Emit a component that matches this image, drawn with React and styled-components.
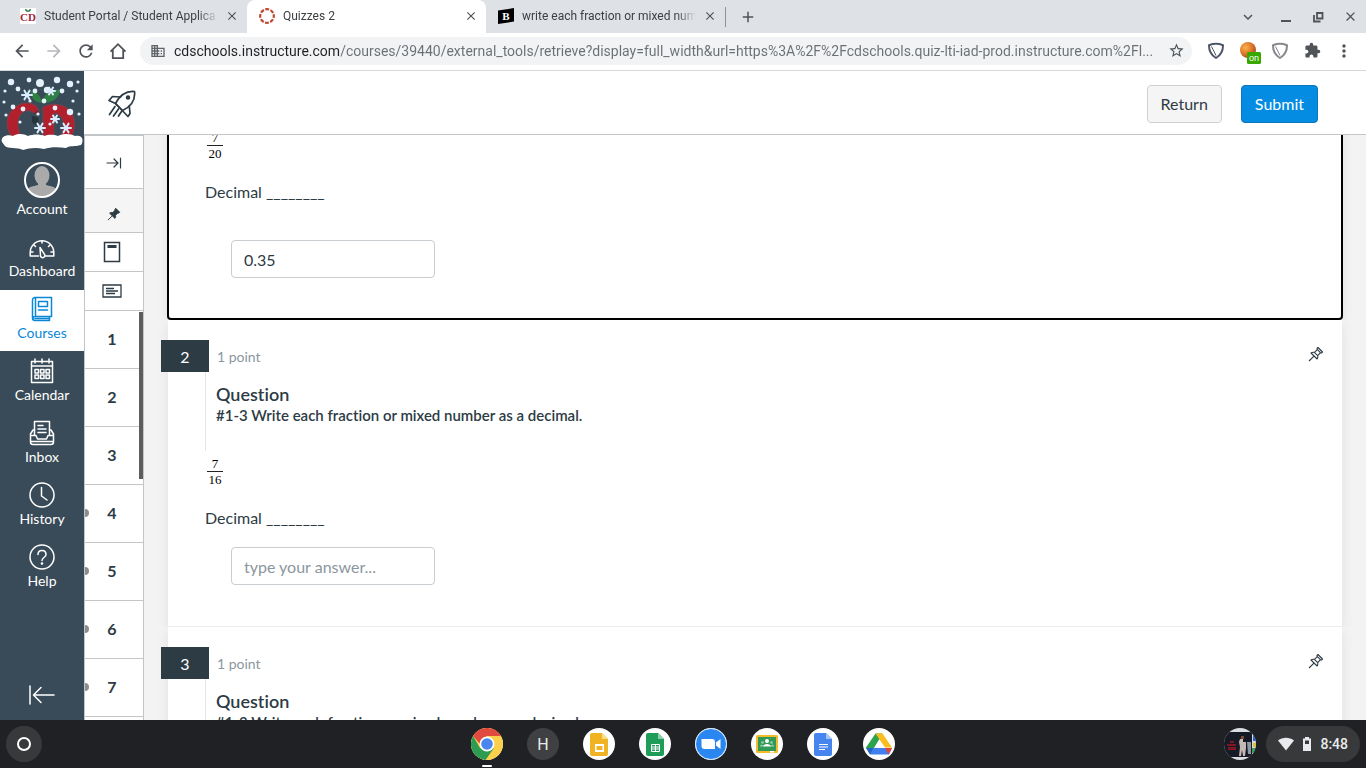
import React from "react";
import styled, { createGlobalStyle, css } from "styled-components";
import {
  MdArrowBack,
  MdArrowForward,
  MdRefresh,
  MdDomain,
  MdStarBorder,
  MdExtension,
  MdMoreVert,
  MdClose,
  MdAdd,
  MdKeyboardArrowDown,
} from "react-icons/md";

const GlobalStyle = createGlobalStyle`
  *, *::before, *::after { box-sizing: border-box; }
  body { margin: 0; font-family: Lato, "Liberation Sans", sans-serif; color: #2d3b45; }
  button, input { font: inherit; color: inherit; margin: 0; }
  button { border: 0; background: none; padding: 0; cursor: pointer; }
  a { color: inherit; text-decoration: none; }
  svg { display: block; flex: none; }
  h2, h3, p, ul, ol { margin: 0; padding: 0; }
  ul, ol { list-style: none; }
`;

const Screen = styled.div`
  display: flex;
  flex-direction: column;
  height: 100vh;
  overflow: hidden;
  background: #fff;
`;

/* Browser frame */

const TabStrip = styled.header`
  flex: none;
  display: flex;
  align-items: center;
  height: 33px;
  padding-left: 8px;
  background: #dee1e6;
  font-family: Roboto, sans-serif;
  font-size: 12px;
  color: #3c4043;
`;

const Tab = styled.div`
  display: flex;
  align-items: center;
  gap: 8px;
  flex: 0 1 239px;
  min-width: 0;
  height: 33px;
  padding: 0 9px 2px 12px;
  ${(p) => p.$active && css`background: #fff; border-radius: 8px 8px 0 0;`}
`;

const TabTitle = styled.span`
  flex: 1;
  min-width: 0;
  overflow: hidden;
  white-space: nowrap;
  line-height: 16px;
  mask-image: linear-gradient(to right, #000 calc(100% - 20px), transparent);
`;

const IconButton = styled.button`
  display: flex;
  align-items: center;
  justify-content: center;
  flex: none;
  width: ${(p) => p.$w || 32}px;
  height: ${(p) => p.$h || 32}px;
  color: ${(p) => p.$tone || "#505357"};
`;

const StripDivider = styled.span`
  width: 1px;
  height: 20px;
  margin-right: 6px;
  background: #8f9398;
`;

const WindowControls = styled.div`
  display: flex;
  align-items: center;
  margin-left: auto;
`;

const Toolbar = styled.div`
  flex: none;
  display: flex;
  align-items: center;
  height: 38px;
  padding: 0 6px 2px;
  border-bottom: 1px solid #d5d7da;
`;

const AddressBar = styled.label`
  display: flex;
  align-items: center;
  gap: 8px;
  flex: 1;
  min-width: 0;
  height: 28px;
  margin: 0 8px 0 6px;
  padding-left: 10px;
  border-radius: 14px;
  background: #f1f3f4;
  color: #5f6368;
`;

const AddressInput = styled.input`
  flex: 1;
  min-width: 0;
  height: 20px;
  padding: 0;
  border: 0;
  outline: 0;
  font-family: Roboto, sans-serif;
  font-size: 14px;
  -webkit-text-fill-color: transparent;
  background: linear-gradient(to right, #202124 166px, #6b6f74 166px);
  background-clip: text;
`;

/* Canvas global navigation */

const Workspace = styled.div`
  display: flex;
  flex: 1;
  min-height: 0;
`;

const GlobalNav = styled.nav`
  display: flex;
  flex-direction: column;
  flex: none;
  width: 84px;
  background: #394b58;
  color: #fff;
`;

const LogoLink = styled.a`
  flex: none;
  height: 85px;
`;

const NavList = styled.ul`
  display: flex;
  flex-direction: column;
  gap: 1px;
`;

const NavLink = styled.a`
  display: flex;
  flex-direction: column;
  align-items: center;
  gap: 1px;
  padding: 6px 0 8px;
  font-size: 14px;
  line-height: 20px;
  ${(p) => p.$active && css`background: #fff; color: #0b87d6;`}
`;

const CollapseButton = styled.button`
  display: flex;
  justify-content: center;
  margin-top: auto;
  padding: 12px 0;
`;

/* Quiz */

const Quiz = styled.div`
  display: flex;
  flex-direction: column;
  flex: 1;
  min-width: 0;
`;

const QuizHeader = styled.header`
  flex: none;
  display: flex;
  align-items: center;
  gap: 19px;
  height: 64px;
  padding: 2px 48px 0 24px;
  border-bottom: 1px solid #c3c6c9;
`;

const ActionButton = styled.button`
  height: 38px;
  padding: 0 13px;
  border: 1px solid ${(p) => (p.$primary ? "#0a76bd" : "#cfd2d5")};
  border-radius: 4px;
  background: ${(p) => (p.$primary ? "#048be2" : "#f5f5f5")};
  color: ${(p) => (p.$primary ? "#fff" : "#2d3b45")};
  font-size: 16px;
  line-height: 20px;
  &:first-of-type { margin-left: auto; }
`;

const QuizBody = styled.div`
  display: flex;
  flex: 1;
  min-height: 0;
`;

const QuestionRail = styled.aside`
  display: flex;
  flex-direction: column;
  flex: none;
  width: 60px;
  border: 1px solid #c3c6c9;
  border-bottom: 0;
  background: #fff;
  overflow: hidden;
`;

const RailTool = styled.button`
  display: flex;
  align-items: center;
  justify-content: center;
  flex: none;
  height: ${(p) => p.$h}px;
  padding-top: ${(p) => (p.$tinted ? 6 : p.$wide ? 2 : 0)}px;
  padding-right: ${(p) => (p.$tinted || p.$wide ? 0 : 4)}px;
  border-bottom: 1px solid #c3c6c9;
  background: ${(p) => (p.$tinted ? "#f5f5f5" : "#fff")};
`;

const RailScroll = styled.div`
  position: relative;
  flex: 1;
  min-height: 0;
  overflow: hidden;
`;

const RailThumb = styled.span`
  position: absolute;
  top: 1px;
  right: 0;
  width: 4px;
  height: 167px;
  background: #5d5d5d;
`;

const RailNumber = styled.button`
  position: relative;
  display: block;
  width: 100%;
  height: 58px;
  padding: 0 4px 2px 0;
  border-bottom: 1px solid #c3c6c9;
  font-size: 16px;
  font-weight: 700;
  ${(p) => p.$unseen && css`
    &::before {
      content: "";
      position: absolute;
      left: -4px;
      top: 24px;
      width: 8px;
      height: 8px;
      border-radius: 50%;
      background: #8b8d8f;
    }
  `}
`;

const QuestionScroll = styled.main`
  flex: 1;
  min-width: 0;
  padding: 0 23px;
  background: #f3f3f3;
  overflow: hidden;
`;

const QuestionSheet = styled.div`
  margin-top: -11px;
`;

const QuestionCard = styled.section`
  ${(p) => p.$focused
    ? css`
        position: relative;
        padding: 4px 36px 40px;
        border: 2px solid #000;
        border-radius: 4px;
      `
    : css`
        margin: 0 1px;
        padding: 20px 18px 41px 37px;
        border-bottom: 1px solid #ebedee;
      `}
  background: #fff;
  box-shadow: 0 4px 12px rgba(0, 0, 0, 0.08);
  clip-path: inset(0 -20px);
`;

const CardTop = styled.div`
  display: flex;
  align-items: flex-start;
  height: 32px;
  margin-left: -44px;
`;

const NumberBadge = styled.h2`
  width: 48px;
  height: 32px;
  background: #2d3b45;
  color: #fff;
  font-size: 16px;
  font-weight: 400;
  line-height: 34px;
  text-align: center;
`;

const Points = styled.span`
  flex: 1;
  padding-left: 8px;
  font-size: 14px;
  line-height: 34px;
  color: #8b969e;
`;

const Stimulus = styled.div`
  padding: 11px 0 26px 10px;
  border-left: 1px solid #e4e6e8;
  font-variant-ligatures: none;
`;

const StimulusTitle = styled.h3`
  font-size: 18px;
  font-weight: 600;
  line-height: 22px;
`;

const StimulusText = styled.p`
  font-size: 15px;
  font-weight: 600;
  line-height: 20px;
`;

const Fraction = styled.div`
  display: flex;
  flex-direction: column;
  width: 16px;
  margin: ${(p) => (p.$first ? 0 : 5)}px 0 0 2px;
  font-family: "Liberation Serif", serif;
  font-size: 13px;
  line-height: 15px;
  text-align: center;
  color: #000;
  span:first-child { border-bottom: 1px solid #222; }
`;

const Prompt = styled.label`
  display: block;
  margin-top: 19px;
  font-size: 16px;
  line-height: 24px;
`;

const AnswerInput = styled.input`
  display: block;
  width: 204px;
  height: 38px;
  margin: ${(p) => (p.$spaced ? 36 : 17)}px 0 0 26px;
  padding: 0 12px;
  border: 1px solid #c7cdd1;
  border-radius: 4px;
  background: #fff;
  font-size: 16px;
  outline: 0;
  &::placeholder { color: #8b969e; }
`;

/* Shelf */

const Shelf = styled.footer`
  flex: none;
  display: grid;
  grid-template-columns: 1fr auto 1fr;
  align-items: center;
  height: 48px;
  padding: 0 6px;
  background: #202124;
  font-family: Roboto, sans-serif;
  color: #e8eaed;
`;

const ShelfApps = styled.div`
  display: flex;
  gap: 24px;
`;

const AppButton = styled.button`
  position: relative;
  width: 32px;
  height: 32px;
  border-radius: 50%;
  background: ${(p) => p.$bg || "#fff"};
  font-size: 16px;
  ${(p) => p.$running && css`
    &::after {
      content: "";
      position: absolute;
      left: 11px;
      bottom: -7px;
      width: 10px;
      height: 2px;
      border-radius: 1px;
      background: #fff;
    }
  `}
`;

const Launcher = styled.button`
  display: flex;
  align-items: center;
  justify-content: center;
  width: 36px;
  height: 36px;
  border-radius: 50%;
  background: #38393b;
`;

const ShelfEnd = styled.div`
  display: flex;
  align-items: center;
  justify-content: flex-end;
  gap: 10px;
`;

const StatusTray = styled.button`
  display: flex;
  align-items: center;
  gap: 8px;
  height: 36px;
  padding: 0 12px;
  border-radius: 18px;
  background: #38393b;
  font-size: 14px;
  font-weight: 500;
`;

/* Drawings */

const Line = ({ size = 26, width = 1.5, box = 26, children }) => (
  <svg width={size} height={size} viewBox={`0 0 ${box} ${box}`} fill="none" stroke="currentColor"
    strokeWidth={width} strokeLinecap="round" strokeLinejoin="round">{children}</svg>
);

const FaviconCD = () => (
  <svg width="16" height="16" viewBox="0 0 16 16">
    <rect width="16" height="16" fill="#fff" />
    <text x="8" y="13" textAnchor="middle" fontFamily="Liberation Serif, serif" fontWeight="700" fontSize="11" fill="#a3263a">CD</text>
    <path d="M8 4C6 4 5 3 5 1c2 0 3 1 3 3 0-2 1-3 3-3 0 2-1 3-3 3" fill="#2f7d4a" />
  </svg>
);

const FaviconCanvas = () => (
  <svg width="16" height="16" viewBox="0 0 16 16" fill="none">
    <circle cx="8" cy="8" r="6.8" stroke="#c0442f" strokeWidth="2.2" strokeDasharray="3.9 1.44" strokeDashoffset="1.95" />
  </svg>
);

const FaviconBartleby = () => (
  <svg width="16" height="16" viewBox="0 0 16 16">
    <path d="M0 2.5 16 0v13.5L0 16z" fill="#000" />
    <text x="8" y="12" textAnchor="middle" fontFamily="Liberation Serif, serif" fontWeight="700" fontSize="11" fill="#fff">B</text>
  </svg>
);

const HomeIcon = () => (
  <svg width="18" height="18" viewBox="0 0 18 18" fill="none" stroke="currentColor" strokeWidth="1.8">
    <path d="M1.5 9.6 9 2.2l7.500 7.400M3.800 8v8.100h10.400V8" />
  </svg>
);

const ShieldIcon = ({ tone }) => (
  <svg width="18" height="18" viewBox="0 0 18 18" fill="none" stroke={tone} strokeWidth="2" strokeLinejoin="round">
    <path d="M2 3.200c4-1.600 10-1.600 14 0 .1 5.500-2 10-7 12.800C4 13.200 1.900 8.700 2 3.200z" />
    <path d="M4.500 4.500 9 13.500" strokeWidth="1" />
  </svg>
);

const ToggleExtensionIcon = () => (
  <svg width="26" height="26" viewBox="0 0 26 26">
    <defs>
      <radialGradient id="ball" cx=".35" cy=".35" r=".8">
        <stop offset="0" stopColor="#f6b24c" /><stop offset=".5" stopColor="#e2762b" /><stop offset="1" stopColor="#8f3d1c" />
      </radialGradient>
    </defs>
    <circle cx="13" cy="12" r="8" fill="url(#ball)" />
    <rect x="12" y="14" width="14" height="12" rx="1.500" fill="#38a800" />
    <text x="19" y="23" textAnchor="middle" fontFamily="Liberation Sans, sans-serif" fontSize="9" fill="#fff">on</text>
  </svg>
);

const MinimizeIcon = () => <svg width="12" height="12" viewBox="0 0 12 12"><path d="M1 9h10v2H1z" fill="currentColor" /></svg>;

const RestoreIcon = () => (
  <svg width="12" height="12" viewBox="0 0 12 12" fill="none" stroke="currentColor" strokeWidth="1.800">
    <path d="M5 2h5.500v5.500H5zM2 4v6.500h6.500" />
  </svg>
);

const flakes = [[11, 11, 4], [29, 9, 3], [40, 12, 5], [57, 9, 4], [70, 13, 4], [78, 11, 2], [5, 20, 2], [18, 18, 3], [47, 19, 4],
  [62, 20, 3], [77, 20, 2], [4, 31, 2], [13, 36, 3], [30, 30, 2], [44, 30, 3], [55, 37, 3], [70, 41, 4], [79, 43, 2],
  [6, 44, 2], [20, 51, 2], [38, 43, 2], [50, 53, 2], [73, 30, 2], [23, 38, 3], [35, 20, 3]];

const Snowflake = ({ x, y, r }) => (
  <g transform={`translate(${x} ${y})`} stroke="#dcecff" strokeWidth="2" strokeLinecap="round">
    {[0, 60, 120].map((a) => <path key={a} d={`M${-r} 0H${r}`} transform={`rotate(${a})`} />)}
  </g>
);

const SchoolLogo = () => (
  <svg width="84" height="80" viewBox="0 0 84 80">
    <path d="M39 41C38 31 24 30 17 35c-12 8-12 20-6 30h10c-5-10-4-22 4-25 4-1 8 0 11 4z" fill="#b3202d" stroke="#77424c" />
    <path d="M43 65V36c9-5 22-3 28 5 5 8 4 17 1 24H61c4-9 4-21-7-23v23z" fill="#b3202d" stroke="#77424c" />
    <path d="M42 32c-1-7-5-11-11-12 0 8 4 11 11 12 2-9 8-14 18-13-1 9-8 13-18 13z" fill="#2f8044" />
    <path d="m32 45 6 2v7l-5-2zM34 43l4-3" fill="#27343d" stroke="#27343d" />
    {flakes.map(([x, y, r]) => <circle key={`${x}-${y}`} cx={x} cy={y} r={r * 0.8} fill="#e4f0fc" />)}
    <Snowflake x={27} y={24} r={5} /><Snowflake x={51} y={20} r={4} />
    <Snowflake x={40} y={57} r={5} /><Snowflake x={66} y={57} r={5} /><Snowflake x={55} y={48} r={4} />
    <path d="M2 71c-2-5 5-8 11-6 5-3 11-2 15 0 5-2 12-2 17 0 4-2 10-1 13 0 6-3 13-2 17 0 8-2 9 5 6 9-7 2-10 0-15 3-8-1-16-1-22 1-8-2-15-1-21 1-6-3-15-1-18-4z" fill="#fff" />
  </svg>
);

const AccountAvatar = () => (
  <svg width="36" height="36" viewBox="0 0 36 36">
    <clipPath id="account"><circle cx="18" cy="18" r="17" /></clipPath>
    <g clipPath="url(#account)" fill="#aaa">
      <ellipse cx="18" cy="13.500" rx="7.500" ry="9.500" />
      <path d="M14 20h8v3c3 1 9 1 11 5v8H3v-8c2-4 8-4 11-5z" />
    </g>
    <circle cx="18" cy="18" r="17" fill="none" stroke="#fff" strokeWidth="2" />
  </svg>
);

const DashboardIcon = () => (
  <Line>
    <path d="M9.500 22H1.200v-3.500a11.800 11.800 0 0 1 23.600 0V22h-8.300" />
    <path d="M11 13.500 15.300 20a2.200 2.200 0 1 1-3.800 1.200zM13 7v2M5 11l1.500 1.500M21 11l-1.500 1.500M2 18h2M22 18h2" />
  </Line>
);

const CoursesIcon = () => (
  <Line>
    <path d="M22.500 1.500H6a2.500 2.500 0 0 0-2.500 2.500v18A2.500 2.500 0 0 0 6 24.500h14.500v-4M22.500 1.500v19H6a2 2 0 0 0 0 4M6.500 2v18M6 22.500h14" />
    <path d="M9.500 5.500h9v5h-9zM9.500 14h9" />
  </Line>
);

const CalendarIcon = () => (
  <Line>
    <path d="M2.500 3.500h21v21h-21zM2.500 8h21M6 1v4M13 1v4M20 1v4" />
    {[6, 11.5, 17].map((x) => [11.5, 17].map((y) => <path key={`${x}${y}`} d={`M${x} ${y}h3.500v3.500h-3.500z`} />))}
  </Line>
);

const InboxIcon = () => (
  <Line>
    <path d="M5.500 15V1.500h15V15M9 5.500h5M9 9h8M9 12.500h8" />
    <path d="M5.500 10H4l-2.500 4v8A2.500 2.500 0 0 0 4 24.500h18a2.500 2.500 0 0 0 2.500-2.500v-8L22 10h-1.500M1.500 15.500H7L8.500 19h9l1.500-3.500h5.500M2 21.500h22" />
  </Line>
);

const HistoryIcon = () => <Line><circle cx="13" cy="13" r="12" /><path d="M12.500 5.500v8.500l5.500 4" /></Line>;

const HelpIcon = () => (
  <Line>
    <circle cx="13" cy="13" r="12" />
    <path d="M9 10.500c0-5.500 8-5.500 8 0 0 3-4 3-4 6" /><circle cx="13" cy="19.500" r=".6" fill="currentColor" />
  </Line>
);

const CollapseIcon = () => <Line><path d="M1 4v18M25 13H4.500M12 5.500 4.500 13l7.500 7.500" /></Line>;

const RocketIcon = () => (
  <Line size={28} box={28} width={1.700}>
    <path d="M7.500 13.500C12 5 18 .8 26.500 1.500 27.500 10 23 16.500 14.500 20.500z" />
    <path d="M12.500 7 4.500 6.500 1 10.500l6.500 3L20 26.500l2-3-.7-7.500" />
    <circle cx="20" cy="7.500" r="1.400" fill="currentColor" />
    <path d="m7 16.500-5.500 8M10.500 19l-5 7M13.500 21.500l-3 4.500" />
  </Line>
);

const ExpandIcon = () => <Line size={16} box={16} width={1.200}><path d="M1 8h11M8 4l4 4-4 4M14.500 3v10" /></Line>;

const pinShape = "M10 1.500 14.500 6l-1 1-1-.3-2.800 3c.4 1.200.2 2.300-.6 3.300L3 7c1-.8 2.200-1 3.400-.6l2.900-2.700L9 2.500z";

const PinIcon = ({ filled, size = 16 }) => (
  <svg width={size} height={size} viewBox="0 0 16 16" fill={filled ? "currentColor" : "none"} stroke="currentColor"
    strokeWidth="1.100" strokeLinejoin="round">
    <path d={pinShape} /><path d="M6 10.200 1 15" />
    {!filled && <path d="m6.400 6.400 3.300 3.300M9.300 3.700l3.200 3" />}
  </svg>
);

const CalculatorIcon = () => (
  <svg width="18" height="22" viewBox="0 0 18 22" fill="none" stroke="currentColor" strokeWidth="1.500">
    <path d="M1.500 1.500h15v19h-15z" /><path d="M4.500 5.500h9" strokeWidth="3" />
  </svg>
);

const NotesIcon = () => (
  <svg width="20" height="14" viewBox="0 0 20 14" fill="none" stroke="currentColor" strokeWidth="1.300">
    <path d="M1 1h18v12H1zM4 4.500h8M4 7h12M4 9.500h9" />
  </svg>
);

const ChromeIcon = () => (
  <svg width="32" height="32" viewBox="0 0 32 32">
    <circle cx="16" cy="16" r="16" fill="#fdd04b" />
    <path d="M2.140 8A16 16 0 0 0 14.500 32L23 20l-7 3-7-3z" fill="#2d9b51" />
    <path d="M2.140 8A16 16 0 0 1 29.860 8H16l-7 8z" fill="#e04a3f" />
    <circle cx="16" cy="16" r="7.500" fill="#fff" /><circle cx="16" cy="16" r="5.800" fill="#4a86ee" />
  </svg>
);

const FileIcon = ({ color, fold, children }) => (
  <svg width="32" height="32" viewBox="0 0 32 32">
    <path d="M9 5h10l6 6v15a2 2 0 0 1-2 2H9a2 2 0 0 1-2-2V7a2 2 0 0 1 2-2z" fill={color} />
    <path d="m19 5 6 6h-6z" fill={fold} />
    {children}
  </svg>
);

const SlidesIcon = () => <FileIcon color="#f0b323" fold="#f9dc86"><path d="M12 16h9v8h-9z" fill="#fff" /><path d="M13.500 18h6v4h-6z" fill="#f0b323" /></FileIcon>;
const SheetsIcon = () => <FileIcon color="#1d9d58" fold="#8ccfae"><path d="M12.500 16.500h8v7h-8zM12.500 19h8M12.500 21h8M16.500 16.500v7" fill="none" stroke="#fff" /></FileIcon>;
const DocsIcon = () => <FileIcon color="#4684ee" fold="#a5c4f7"><path d="M12 16.500h9M12 19h9M12 21.500h6" stroke="#fff" /></FileIcon>;

const ZoomIcon = () => (
  <svg width="32" height="32" viewBox="0 0 32 32">
    <circle cx="16" cy="16" r="15.500" fill="#2a86f0" stroke="#d7e8fb" />
    <path d="M6.500 11H17a3 3 0 0 1 3 3v7H9.500a3 3 0 0 1-3-3zM21 14.500l4.500-3.500v10L21 17.500z" fill="#fff" />
  </svg>
);

const ClassroomIcon = () => (
  <svg width="32" height="32" viewBox="0 0 32 32">
    <rect x="5" y="7" width="22" height="18" rx="1.500" fill="#f3bb2c" /><path d="M7 9h18v14H7z" fill="#319a57" />
    <g fill="#fff"><circle cx="16" cy="13" r="2" /><path d="M12 18.500c0-3.500 8-3.500 8 0zM19 23h4v1.500h-4z" /></g>
    <g fill="#9bd0ae"><circle cx="11.500" cy="14.500" r="1.300" /><circle cx="20.500" cy="14.500" r="1.300" /><path d="M9 18.500c0-2.500 3-2.500 3 0zM20 18.500c0-2.500 3-2.500 3 0z" /></g>
  </svg>
);

const DriveIcon = () => (
  <svg width="32" height="32" viewBox="0 0 32 32">
    <path d="M12.500 5.500h7L16 12 7.500 26.500 3 19.500z" fill="#2ba24c" />
    <path d="M12.500 5.500h7L29 19.500h-7z" fill="#fbbc1f" />
    <path d="M10.500 20H29l-3 6.500H7z" fill="#3f7ff0" />
    <path d="M22 20h7l-3.500 6.500z" fill="#e4443a" /><path d="M3 20h7.500l-3.500 6.500z" fill="#2864c9" />
    <path d="m16 12 5 8H11z" fill="#fff" />
  </svg>
);

const UserPicture = () => (
  <svg width="32" height="32" viewBox="0 0 32 32">
    <clipPath id="user"><circle cx="16" cy="16" r="16" /></clipPath>
    <g clipPath="url(#user)">
      <path d="M0 0h32v32H0z" fill="#d9dce0" /><path d="M0 4h28v25H0z" fill="#151a24" />
      <path d="M3 16h9v2H3zM4 19h8v3H4zM6 13h4v2H6z" fill="#7d1725" />
      <path d="M16 11h3v3h3v6l-1 8h-2l-1-6-1 6h-2l1-9-1-5z" fill="#c4b9b5" /><path d="M23 14h4v12h-3z" fill="#8b9aa5" />
      <path d="M17 8h3v3h-3z" fill="#7a4a3d" /><path d="M29 7h3v6h-3z" fill="#2b62c9" /><path d="M29 15h3v4h-3z" fill="#d8c43a" /><path d="M28 20h3v5h-3z" fill="#3c9a5b" />
    </g>
  </svg>
);

const WifiIcon = () => <svg width="16" height="14" viewBox="0 0 16 14"><path d="M8 13.500 0 3.500C4.500-.2 11.500-.2 16 3.500z" fill="currentColor" /></svg>;
const BatteryIcon = () => (
  <svg width="10" height="14" viewBox="0 0 10 14">
    <path d="M3 0h4v1.500h2V14H1V1.500h2z" fill="currentColor" /><path d="M3 3.500h4V7H3z" fill="#38393b" />
  </svg>
);

/* Data and page */

const tabs = [
  { title: "Student Portal / Student Applica", Icon: FaviconCD },
  { title: "Quizzes 2", Icon: FaviconCanvas, active: true },
  { title: "write each fraction or mixed num", Icon: FaviconBartleby },
];

const navItems = [
  { label: "Account", Icon: AccountAvatar },
  { label: "Dashboard", Icon: DashboardIcon },
  { label: "Courses", Icon: CoursesIcon, active: true },
  { label: "Calendar", Icon: CalendarIcon },
  { label: "Inbox", Icon: InboxIcon },
  { label: "History", Icon: HistoryIcon },
  { label: "Help", Icon: HelpIcon },
];

const apps = [
  { name: "Chrome", Icon: ChromeIcon, running: true },
  { name: "H", bg: "#3f4042" },
  { name: "Slides", Icon: SlidesIcon },
  { name: "Sheets", Icon: SheetsIcon },
  { name: "Zoom", Icon: ZoomIcon },
  { name: "Classroom", Icon: ClassroomIcon },
  { name: "Docs", Icon: DocsIcon },
  { name: "Drive", Icon: DriveIcon },
];

const address =
  "cdschools.instructure.com/courses/39440/external_tools/retrieve?display=full_width&url=https%3A%2F%2Fcdschools.quiz-lti-iad-prod.instructure.com%2Fl...";

function Question({ number, top, bottom, answer, focused }) {
  const id = `answer-${number}`;
  return (
    <QuestionCard $focused={focused}>
      {!focused && (
        <>
          <CardTop>
            <NumberBadge>{number}</NumberBadge>
            <Points>1 point</Points>
            <IconButton type="button" aria-label={`Pin question ${number}`} $w={16} $h={28} $tone="#2d3b45"><PinIcon /></IconButton>
          </CardTop>
          <Stimulus>
            <StimulusTitle>Question</StimulusTitle>
            <StimulusText>#1-3 Write each fraction or mixed number as a decimal.</StimulusText>
          </Stimulus>
        </>
      )}
      <Fraction $first={focused}><span>{top}</span><span>{bottom}</span></Fraction>
      <Prompt htmlFor={id}>Decimal ________</Prompt>
      <AnswerInput id={id} type="text" defaultValue={answer} placeholder="type your answer..." $spaced={focused} />
    </QuestionCard>
  );
}

export default function App() {
  return (
    <Screen>
      <GlobalStyle />
      <TabStrip>
        {tabs.map(({ title, Icon, active }) => (
          <Tab key={title} $active={active}>
            <Icon />
            <TabTitle>{title}</TabTitle>
            <IconButton type="button" aria-label="Close tab" $w={12} $h={16}><MdClose size={14} /></IconButton>
          </Tab>
        ))}
        <StripDivider />
        <IconButton type="button" aria-label="New tab"><MdAdd size={18} /></IconButton>
        <WindowControls>
          <IconButton type="button" aria-label="Search tabs" $w={44}><MdKeyboardArrowDown size={18} /></IconButton>
          <IconButton type="button" aria-label="Minimize"><MinimizeIcon /></IconButton>
          <IconButton type="button" aria-label="Restore"><RestoreIcon /></IconButton>
          <IconButton type="button" aria-label="Close window"><MdClose size={15} /></IconButton>
        </WindowControls>
      </TabStrip>
      <Toolbar>
        <IconButton type="button" aria-label="Back"><MdArrowBack size={20} /></IconButton>
        <IconButton type="button" aria-label="Forward" $tone="#b5b7ba"><MdArrowForward size={20} /></IconButton>
        <IconButton type="button" aria-label="Reload"><MdRefresh size={20} /></IconButton>
        <IconButton type="button" aria-label="Home"><HomeIcon /></IconButton>
        <AddressBar>
          <MdDomain size={16} />
          <AddressInput type="text" aria-label="Address" defaultValue={address} />
          <IconButton type="button" aria-label="Bookmark"><MdStarBorder size={17} /></IconButton>
        </AddressBar>
        <IconButton type="button" aria-label="Shield extension"><ShieldIcon tone="#4d5668" /></IconButton>
        <IconButton type="button" aria-label="Toggle extension"><ToggleExtensionIcon /></IconButton>
        <IconButton type="button" aria-label="Second shield extension"><ShieldIcon tone="#85888c" /></IconButton>
        <IconButton type="button" aria-label="Extensions"><MdExtension size={17} /></IconButton>
        <IconButton type="button" aria-label="Menu"><MdMoreVert size={20} /></IconButton>
      </Toolbar>
      <Workspace>
        <GlobalNav>
          <LogoLink href="#home" aria-label="Home"><SchoolLogo /></LogoLink>
          <NavList>
            {navItems.map(({ label, Icon, active }) => (
              <li key={label}><NavLink href={`#${label}`} $active={active}><Icon />{label}</NavLink></li>
            ))}
          </NavList>
          <CollapseButton type="button" aria-label="Collapse navigation"><CollapseIcon /></CollapseButton>
        </GlobalNav>
        <Quiz>
          <QuizHeader>
            <RocketIcon />
            <ActionButton type="button">Return</ActionButton>
            <ActionButton type="button" $primary>Submit</ActionButton>
          </QuizHeader>
          <QuizBody>
            <QuestionRail>
              <RailTool type="button" aria-label="Expand" $h={53} $wide><ExpandIcon /></RailTool>
              <RailTool type="button" aria-label="Pinned" $h={44} $tinted><PinIcon filled size={14} /></RailTool>
              <RailTool type="button" aria-label="Calculator" $h={39}><CalculatorIcon /></RailTool>
              <RailTool type="button" aria-label="Notes" $h={39}><NotesIcon /></RailTool>
              <RailScroll>
                {[1, 2, 3, 4, 5, 6, 7].map((n) => (
                  <RailNumber key={n} type="button" $unseen={n > 3}>{n}</RailNumber>
                ))}
                <RailThumb />
              </RailScroll>
            </QuestionRail>
            <QuestionScroll>
              <QuestionSheet>
                <Question number={1} top="7" bottom="20" answer="0.35" focused />
                <Question number={2} top="7" bottom="16" />
                <Question number={3} top="7" bottom="16" />
              </QuestionSheet>
            </QuestionScroll>
          </QuizBody>
        </Quiz>
      </Workspace>
      <Shelf>
        <Launcher type="button" aria-label="Launcher">
          <svg width="16" height="16" viewBox="0 0 16 16"><circle cx="8" cy="8" r="6" fill="none" stroke="#fff" strokeWidth="2" /></svg>
        </Launcher>
        <ShelfApps>
          {apps.map(({ name, Icon, bg, running }) => (
            <AppButton key={name} type="button" aria-label={name} $bg={bg} $running={running}>{Icon ? <Icon /> : name}</AppButton>
          ))}
        </ShelfApps>
        <ShelfEnd>
          <UserPicture />
          <StatusTray type="button"><WifiIcon /><BatteryIcon />8:48</StatusTray>
        </ShelfEnd>
      </Shelf>
    </Screen>
  );
}
